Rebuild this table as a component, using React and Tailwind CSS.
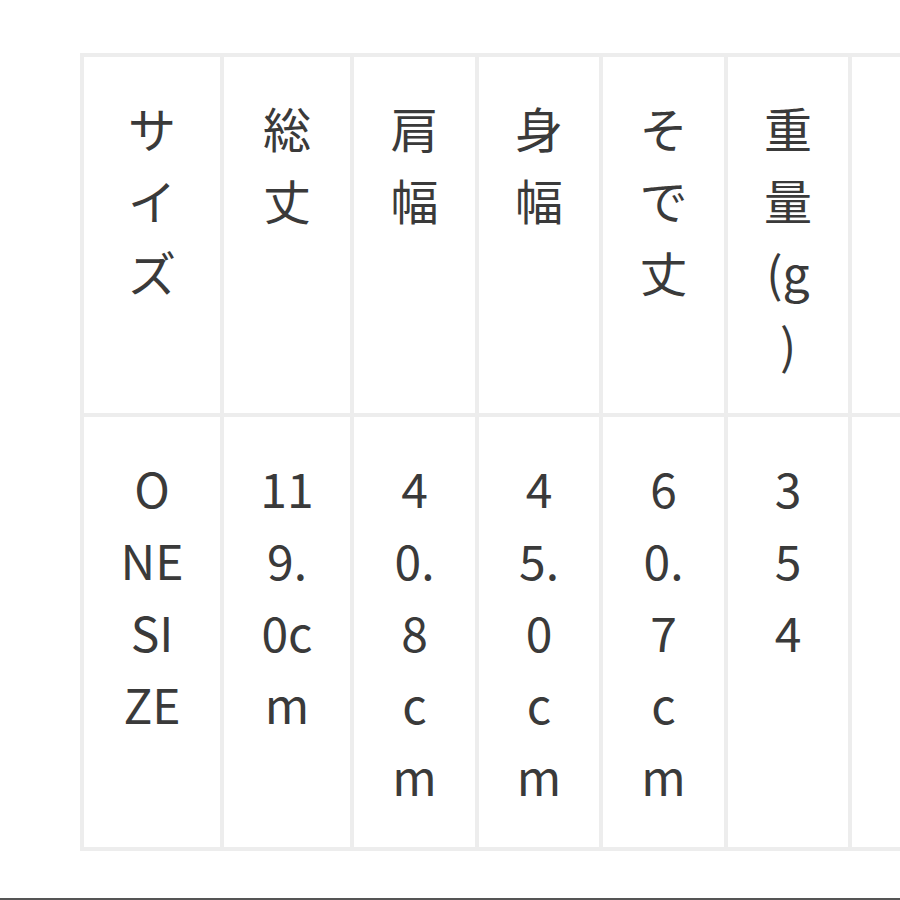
const header = [
  ['サ', 'イ', 'ズ'],
  ['総', '丈'],
  ['肩', '幅'],
  ['身', '幅'],
  ['そ', 'で', '丈'],
  ['重', '量', '(g', ')'],
  [],
];

const row = [
  ['O', 'NE', 'SI', 'ZE'],
  ['11', '9.', '0c', 'm'],
  ['4', '0.', '8', 'c', 'm'],
  ['4', '5.', '0', 'c', 'm'],
  ['6', '0.', '7', 'c', 'm'],
  ['3', '5', '4'],
  [],
];

const Cell = ({ lines }) => (
  <div className="bg-white pt-[34px] pb-[32px] flex flex-col items-center">
    {lines.map((l, i) => (
      <span key={i} className="block leading-[72px] whitespace-nowrap">{l}</span>
    ))}
  </div>
);

export default function App() {
  return (
    <div
      className="w-[900px] h-[900px] overflow-hidden bg-white flex flex-col text-[48px] text-[#3a3a3a]"
      style={{ fontFamily: '"Noto Sans CJK JP", "Noto Sans", sans-serif' }}
    >
      <div className="pt-[53px] pl-[80px]">
        <div className="grid grid-cols-[136px_126px_121px_120px_121px_120px_120px] grid-rows-[356px_430px] gap-[4px] p-[4px] bg-[#ededed] w-max">
          {header.map((lines, i) => <Cell key={'h' + i} lines={lines} />)}
          {row.map((lines, i) => <Cell key={'r' + i} lines={lines} />)}
        </div>
      </div>
      <div className="mt-auto h-[2px] bg-[#555555]" />
    </div>
  );
}
